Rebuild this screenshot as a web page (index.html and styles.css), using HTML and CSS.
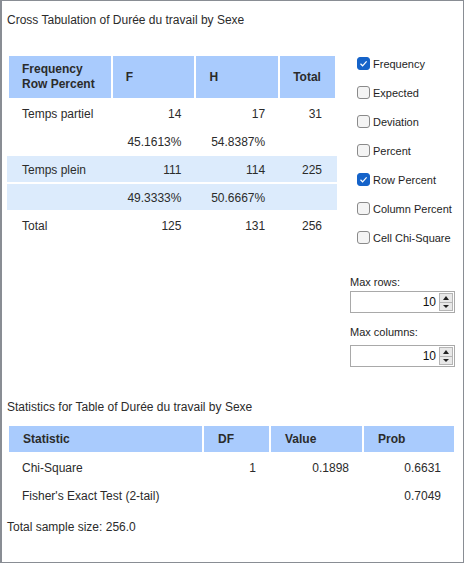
FILE: index.html
```html
<!DOCTYPE html>
<html>
<head>
<meta charset="utf-8">
<link rel="stylesheet" href="styles.css">
</head>
<body>
<div class="window">
  <div class="top">
    <div class="left">
      <div class="title">Cross Tabulation of Durée du travail by Sexe</div>
      <div class="xtab">
        <div class="xhead">
          <div class="hc c1">Frequency<br>Row Percent</div>
          <div class="hc c2">F</div>
          <div class="hc c3">H</div>
          <div class="hc c4">Total</div>
        </div>
        <div class="xrow">
          <div class="c1 lab">Temps partiel</div><div class="c2 num">14</div><div class="c3 num">17</div><div class="c4 num">31</div>
        </div>
        <div class="xrow">
          <div class="c1 lab"></div><div class="c2 num">45.1613%</div><div class="c3 num">54.8387%</div><div class="c4 num"></div>
        </div>
        <div class="xrow alt">
          <div class="c1 lab">Temps plein</div><div class="c2 num">111</div><div class="c3 num">114</div><div class="c4 num">225</div>
        </div>
        <div class="xrow alt">
          <div class="c1 lab"></div><div class="c2 num">49.3333%</div><div class="c3 num">50.6667%</div><div class="c4 num"></div>
        </div>
        <div class="xrow">
          <div class="c1 lab">Total</div><div class="c2 num">125</div><div class="c3 num">131</div><div class="c4 num">256</div>
        </div>
      </div>
    </div>
    <div class="right">
      <div class="opts">
        <label class="opt"><span class="cb on"><svg viewBox="0 0 13 13" width="13" height="13"><path d="M3.5 6.8 L5.6 8.8 L9.6 4.4" fill="none" stroke="#fff" stroke-width="1.2"/></svg></span>Frequency</label>
        <label class="opt"><span class="cb"></span>Expected</label>
        <label class="opt"><span class="cb"></span>Deviation</label>
        <label class="opt"><span class="cb"></span>Percent</label>
        <label class="opt"><span class="cb on"><svg viewBox="0 0 13 13" width="13" height="13"><path d="M3.5 6.8 L5.6 8.8 L9.6 4.4" fill="none" stroke="#fff" stroke-width="1.2"/></svg></span>Row Percent</label>
        <label class="opt"><span class="cb"></span>Column Percent</label>
        <label class="opt"><span class="cb"></span>Cell Chi-Square</label>
      </div>
      <div class="fld first">Max rows:</div>
      <div class="spin">
        <span class="val">10</span>
        <span class="btns"><span class="up"></span><span class="dn"></span></span>
      </div>
      <div class="fld second">Max columns:</div>
      <div class="spin">
        <span class="val">10</span>
        <span class="btns"><span class="up"></span><span class="dn"></span></span>
      </div>
    </div>
  </div>
  <div class="bottom">
    <div class="title2">Statistics for Table of Durée du travail by Sexe</div>
    <div class="stab">
      <div class="shead">
        <div class="hc s1">Statistic</div>
        <div class="hc s2">DF</div>
        <div class="hc s3">Value</div>
        <div class="hc s4">Prob</div>
      </div>
      <div class="srow">
        <div class="s1 lab">Chi-Square</div><div class="s2 num">1</div><div class="s3 num">0.1898</div><div class="s4 num">0.6631</div>
      </div>
      <div class="srow">
        <div class="s1 lab">Fisher's Exact Test (2-tail)</div><div class="s2 num"></div><div class="s3 num"></div><div class="s4 num">0.7049</div>
      </div>
    </div>
    <div class="total">Total sample size: 256.0</div>
  </div>
</div>
</body>
</html>
```
FILE: styles.css
```css
html, body {
  margin: 0;
  padding: 0;
  background: #fff;
}
.window {
  width: 464px;
  height: 563px;
  box-sizing: border-box;
  border: 1px solid #898d94;
  border-left-width: 2px;
  font-family: "Liberation Sans", Arial, sans-serif;
  font-size: 12px;
  color: #2b2b2b;
  background: #fff;
}
.top {
  display: flex;
  height: 368px;
}
.left {
  width: 348px;
}
.title {
  padding: 12px 0 0 5px;
  line-height: 14px;
  height: 14px;
}
.xtab {
  margin: 29px 0 0 5px;
  width: 330px;
}
.xhead {
  display: flex;
  gap: 2px;
  padding: 0 2px;
  height: 42px;
  margin-bottom: 2px;
}
.hc {
  background: #a9cbfd;
  font-weight: bold;
  display: flex;
  align-items: center;
  box-sizing: border-box;
  padding-left: 13px;
  line-height: 15px;
}
.c1 { width: 102px; }
.c2 { width: 82px; }
.c3 { width: 82px; }
.c4 { width: 55px; }
.xrow {
  display: flex;
  gap: 2px;
  padding: 1px 2px 0;
  box-sizing: border-box;
  height: 26px;
  margin-bottom: 2px;
  align-items: center;
}
.xrow.alt {
  background: #dcebfc;
}
.lab {
  box-sizing: border-box;
  padding-left: 13px;
  white-space: nowrap;
}
.num {
  box-sizing: border-box;
  padding-right: 13px;
  text-align: right;
}
.right {
  width: 110px;
  font-size: 11px;
  color: #1e1e1e;
}
.opts {
  padding-top: 48px;
}
.opt {
  display: flex;
  align-items: center;
  height: 29px;
  padding-left: 7px;
}
.cb {
  width: 13px;
  height: 13px;
  box-sizing: border-box;
  border: 1px solid #8a8a8a;
  border-radius: 3px;
  background: #f4f4f4;
  margin-right: 3px;
  flex: none;
  display: block;
}
.cb.on {
  background: #1563c9;
  border-color: #1563c9;
}
.cb.on svg {
  display: block;
  margin: -1px 0 0 -1px;
}
.fld {
  line-height: 14px;
  height: 14px;
}
.fld.first {
  margin-top: 23px;
}
.fld.second {
  margin-top: 12px;
}
.spin {
  margin-top: 2px;
  width: 105px;
  height: 22px;
  box-sizing: border-box;
  border: 1px solid #a9a9a9;
  display: flex;
  align-items: center;
  justify-content: flex-end;
  background: #fff;
}
.fld.second + .spin {
  margin-top: 6px;
}
.val {
  font-size: 12px;
  color: #111;
  margin-right: 3px;
}
.btns {
  width: 14px;
  height: 18px;
  margin-right: 1px;
  display: flex;
  flex-direction: column;
  border: 1px solid #b5b5b5;
  box-sizing: border-box;
  background: #e8e8e8;
}
.btns span {
  flex: 1;
  display: flex;
  align-items: center;
  justify-content: center;
}
.btns .up {
  border-bottom: 1px solid #b5b5b5;
}
.btns .up::after {
  content: "";
  border-left: 3px solid transparent;
  border-right: 3px solid transparent;
  border-bottom: 4px solid #222;
}
.btns .dn::after {
  content: "";
  border-left: 3px solid transparent;
  border-right: 3px solid transparent;
  border-top: 3px solid #222;
}
.bottom {
  padding-top: 31px;
}
.title2 {
  padding-left: 5px;
  line-height: 14px;
  height: 14px;
}
.stab {
  margin: 12px 0 0 7px;
}
.shead {
  display: flex;
  gap: 2px;
  height: 26px;
  margin-bottom: 2px;
}
.shead .hc {
  padding-left: 14px;
}
.s1 { width: 193px; }
.s2 { width: 65px; }
.s3 { width: 91px; }
.s4 { width: 90px; }
.srow {
  display: flex;
  gap: 2px;
  height: 28px;
  align-items: center;
}
.total {
  margin-top: 10px;
  padding-left: 5px;
  line-height: 14px;
}
```
